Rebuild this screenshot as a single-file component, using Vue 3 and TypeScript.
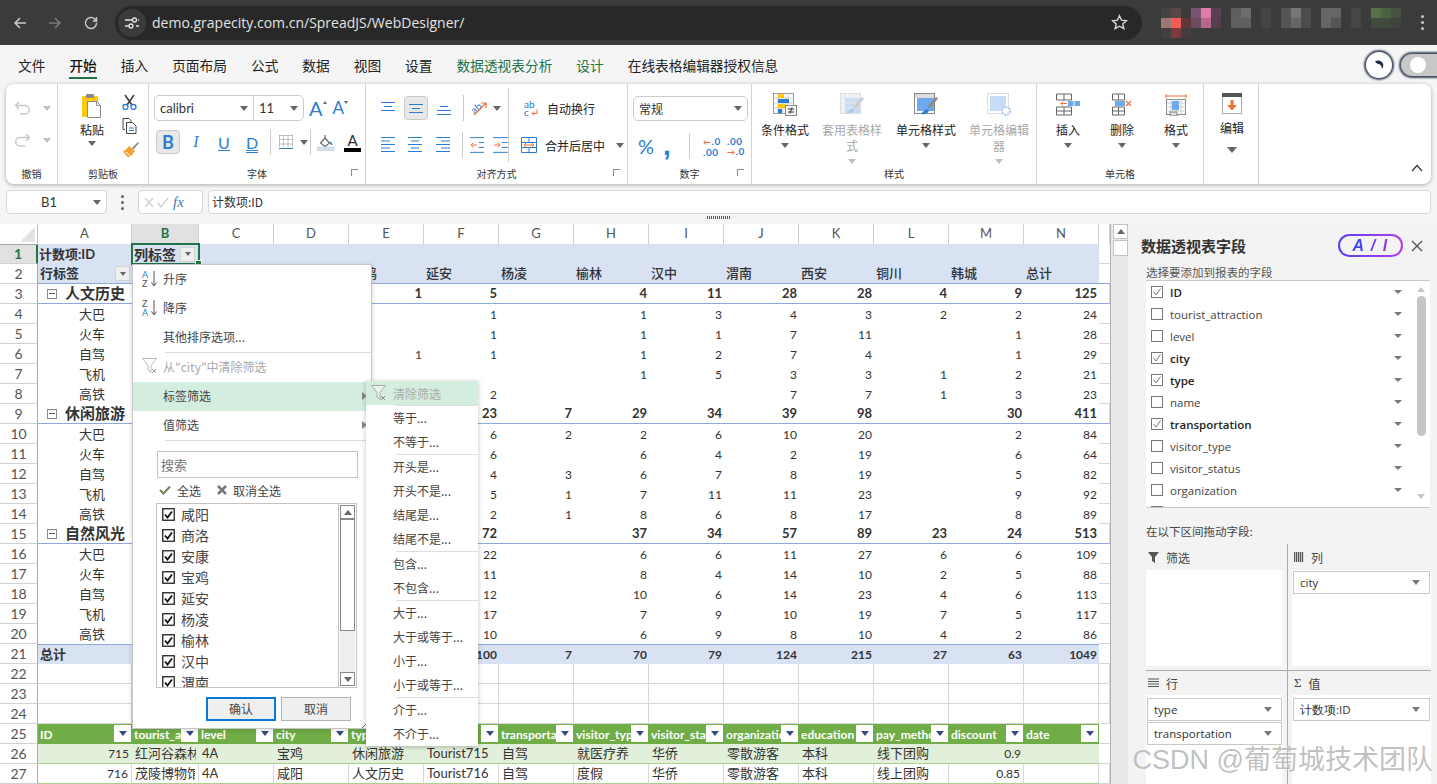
<script setup lang="ts">
interface SheetRow {
  n: number
  kind: string
  cells: string[]
}

// pivot values run from column E to N, blanks are empty strings
const pivot = (a: string, vals: string): string[] => {
  const list = vals.split(',')
  return [a, '', '', '', ...list]
}

const rows: SheetRow[] = [
  { n: 1, kind: 'head1', cells: ['计数项:ID', '列标签'] },
  { n: 2, kind: 'head2', cells: ['行标签', '咸阳', '商洛', '安康', '宝鸡', '延安', '杨凌', '榆林', '汉中', '渭南', '西安', '铜川', '韩城', '总计'] },
  { n: 3, kind: 'group', cells: pivot('人文历史', '1,5,,4,11,28,28,4,9,125') },
  { n: 4, kind: 'item', cells: pivot('大巴', ',1,,1,3,4,3,2,2,24') },
  { n: 5, kind: 'item', cells: pivot('火车', ',1,,1,1,7,11,,1,28') },
  { n: 6, kind: 'item', cells: pivot('自驾', '1,1,,1,2,7,4,,1,29') },
  { n: 7, kind: 'item', cells: pivot('飞机', ',,,1,5,3,3,1,2,21') },
  { n: 8, kind: 'item', cells: pivot('高铁', ',2,,,,7,7,1,3,23') },
  { n: 9, kind: 'group', cells: pivot('休闲旅游', ',23,7,29,34,39,98,,30,411') },
  { n: 10, kind: 'item', cells: pivot('大巴', ',6,2,2,6,10,20,,2,84') },
  { n: 11, kind: 'item', cells: pivot('火车', ',6,,6,4,2,19,,6,64') },
  { n: 12, kind: 'item', cells: pivot('自驾', ',4,3,6,7,8,19,,5,82') },
  { n: 13, kind: 'item', cells: pivot('飞机', ',5,1,7,11,11,23,,9,92') },
  { n: 14, kind: 'item', cells: pivot('高铁', ',2,1,8,6,8,17,,8,89') },
  { n: 15, kind: 'group', cells: pivot('自然风光', ',72,,37,34,57,89,23,24,513') },
  { n: 16, kind: 'item', cells: pivot('大巴', ',22,,6,6,11,27,6,6,109') },
  { n: 17, kind: 'item', cells: pivot('火车', ',11,,8,4,14,10,2,5,88') },
  { n: 18, kind: 'item', cells: pivot('自驾', ',12,,10,6,14,23,4,6,113') },
  { n: 19, kind: 'item', cells: pivot('飞机', ',17,,7,9,10,19,7,5,117') },
  { n: 20, kind: 'item', cells: pivot('高铁', ',10,,6,9,8,10,4,2,86') },
  { n: 21, kind: 'total', cells: pivot('总计', ',100,7,70,79,124,215,27,63,1049') },
  { n: 22, kind: 'blank', cells: [] },
  { n: 23, kind: 'blank', cells: [] },
  { n: 24, kind: 'blank', cells: [] },
  { n: 25, kind: 'thead', cells: ['ID', 'tourist_attraction', 'level', 'city', 'type', 'name', 'transportation', 'visitor_type', 'visitor_status', 'organization', 'education', 'pay_method', 'discount', 'date'] },
  { n: 26, kind: 'tband', cells: ['715', '红河谷森林', '4A', '宝鸡', '休闲旅游', 'Tourist715', '自驾', '就医疗养', '华侨', '零散游客', '本科', '线下团购', '0.9', ''] },
  { n: 27, kind: 'tbody', cells: ['716', '茂陵博物馆', '4A', '咸阳', '人文历史', 'Tourist716', '自驾', '度假', '华侨', '零散游客', '本科', '线上团购', '0.85', ''] },
]

const columns = 'ABCDEFGHIJKLMN'.split('')
const slots = Array.from({ length: 14 }, (_, i) => i)

const isNumeric = (row: SheetRow, i: number) => {
  if (row.kind === 'group' || row.kind === 'item' || row.kind === 'total') return i > 0
  if (row.kind === 'tband' || row.kind === 'tbody') return i === 0 || i === 12
  return false
}

const menuTabs = [
  { label: '文件' },
  { label: '开始', active: true },
  { label: '插入' },
  { label: '页面布局' },
  { label: '公式' },
  { label: '数据' },
  { label: '视图' },
  { label: '设置' },
  { label: '数据透视表分析', green: true },
  { label: '设计', green: true },
  { label: '在线表格编辑器授权信息' },
]

// blurred extension icons in the browser bar: x, y, colour
const blur: [number, number, string][] = [
  [0, 0, '#454343'], [10, 0, '#5a4646'], [30, 0, '#7c5472'], [40, 0, '#e07ca6'], [50, 0, '#5a3f52'],
  [70, 0, '#5e5e5e'], [80, 0, '#6c6c6c'], [100, 0, '#454545'], [120, 0, '#555'], [130, 0, '#777'], [140, 0, '#4c4c4c'],
  [160, 0, '#666'], [170, 0, '#666'], [190, 0, '#474747'], [210, 0, '#56704a'], [220, 0, '#4c6242'], [230, 0, '#465240'],
  [0, 10, '#9c7670'], [10, 10, '#f45c5c'], [20, 10, '#5f3a3a'], [30, 10, '#6c4a62'], [40, 10, '#b8648c'], [50, 10, '#533f4f'],
  [70, 10, '#606060'], [80, 10, '#606060'], [100, 10, '#454545'], [120, 10, '#555'], [130, 10, '#666'], [140, 10, '#4c4c4c'],
  [160, 10, '#666'], [170, 10, '#555'], [190, 10, '#474747'], [210, 10, '#414a3e'], [220, 10, '#404a3c'], [230, 10, '#3f443c'],
  [0, 20, '#454040'], [10, 20, '#7c3a3e'], [20, 20, '#463c3c'],
]

const cities = ['咸阳', '商洛', '安康', '宝鸡', '延安', '杨凌', '榆林', '汉中', '渭南']

const subGroups = [
  ['等于...', '不等于...'],
  ['开头是...', '开头不是...', '结尾是...', '结尾不是...'],
  ['包含...', '不包含...'],
  ['大于...', '大于或等于...', '小于...', '小于或等于...'],
  ['介于...', '不介于...'],
]

const fields = [
  { name: 'ID', on: true },
  { name: 'tourist_attraction', on: false },
  { name: 'level', on: false },
  { name: 'city', on: true },
  { name: 'type', on: true },
  { name: 'name', on: false },
  { name: 'transportation', on: true },
  { name: 'visitor_type', on: false },
  { name: 'visitor_status', on: false },
  { name: 'organization', on: false },
  { name: 'education_level', on: false },
]
</script>

<template>
  <div class="app">
    <!-- browser bar -->
    <header class="chrome">
      <svg class="nav-icon" viewBox="0 0 16 16"><path d="M14 8H3M8 3 3 8l5 5" fill="none" stroke="#c7c7c7" stroke-width="1.6" /></svg>
      <svg class="nav-icon fwd" viewBox="0 0 16 16"><path d="M2 8h11M8 3l5 5-5 5" fill="none" stroke="#7a7a7a" stroke-width="1.6" /></svg>
      <svg class="nav-icon reload" viewBox="0 0 16 16"><path d="M13.5 8a5.5 5.5 0 1 1-1.6-3.9L13.5 6V2M13.5 6H9.8" fill="none" stroke="#c7c7c7" stroke-width="1.5" /></svg>
      <div class="omnibox">
        <span class="site-info">
          <svg viewBox="0 0 16 16" width="16" height="16"><g fill="none" stroke="#e3e3e3" stroke-width="1.3"><path d="M1 5h7M12 11h3M1 11h4M14 5h1" /><circle cx="10.5" cy="5" r="2" /><circle cx="7" cy="11" r="2" /></g></svg>
        </span>
        <span class="url">demo.grapecity.com.cn/SpreadJS/WebDesigner/</span>
        <svg class="star" viewBox="0 0 16 16"><path d="m8 1.6 1.9 4.2 4.6.5-3.4 3 1 4.5L8 11.5l-4.1 2.3 1-4.5-3.4-3 4.6-.5z" fill="none" stroke="#d8d8d8" stroke-width="1.3" /></svg>
      </div>
      <svg class="blur" viewBox="0 0 240 30" width="240" height="30"><rect v-for="(b, i) in blur" :key="i" :x="b[0]" :y="b[1]" width="10" height="10" :fill="b[2]" /></svg>
      <span class="chrome-dots"><i /><i /><i /></span>
    </header>

    <!-- tab strip -->
    <nav class="menubar">
      <span v-for="tab in menuTabs" :key="tab.label" :class="['tab', { active: tab.active, green: tab.green }]">{{ tab.label }}</span>
      <span class="theme-btn">
        <svg viewBox="0 0 14 14" width="14" height="14"><path d="M3 3.5C6 1.5 10.5 3 11.2 6.5c.3 1.700-.2 3.200-1.200 4.500C10 8.500 8.500 6 6.500 6 5.500 6 4 5 3 3.500z" fill="#1e2a44" /></svg>
      </span>
      <span class="toggle"><i /></span>
    </nav>

    <!-- ribbon -->
    <section class="ribbon">
      <div class="group g-undo">
        <div class="group-body undo-body">
          <div class="undo-row">
            <svg width="17" height="16" viewBox="0 0 17 16"><path d="M5 2 1.500 5.500 5 9M1.500 5.500H11a4 4 0 0 1 0 8.500H6" fill="none" stroke="#c9c9c9" stroke-width="1.500" /></svg>
            <i class="caret light" />
          </div>
          <div class="undo-row">
            <svg width="17" height="16" viewBox="0 0 17 16"><path d="M12 2l3.500 3.500L12 9M15.500 5.500H6a4 4 0 0 0 0 8.500h5" fill="none" stroke="#c9c9c9" stroke-width="1.500" /></svg>
            <i class="caret light" />
          </div>
        </div>
        <div class="group-label">撤销</div>
      </div>

      <div class="group g-clip">
        <div class="group-body clip-body">
          <div class="paste">
            <svg width="20" height="24" viewBox="0 0 20 24">
              <rect x="0" y="2" width="16" height="21" rx="1" fill="#ffc90e" />
              <rect x="4" y="0" width="8" height="4" rx="1" fill="#8a8a8a" />
              <path d="M5.500 7.500h9l4 4v12h-13z" fill="#fff" stroke="#8c8c8c" />
              <path d="M14.500 7.500v4h4" fill="none" stroke="#8c8c8c" />
            </svg>
            <span class="paste-label">粘贴</span>
            <i class="caret" />
          </div>
          <div class="clip-tools">
            <svg width="15" height="16" viewBox="0 0 15 16"><path d="M3 1l7 10M12 1 5 11" stroke="#444" stroke-width="1.700" fill="none" /><circle cx="3.500" cy="13" r="2.500" fill="none" stroke="#2b7cd3" stroke-width="1.300" /><circle cx="11.500" cy="13" r="2.500" fill="none" stroke="#2b7cd3" stroke-width="1.300" /></svg>
            <svg width="15" height="16" viewBox="0 0 15 16"><path d="M1 .5h6l2 2V4M3 11.500H1V.5" fill="none" stroke="#444" /><path d="M4.500 4.500h6l3.500 3.500v7.500h-9.500z" fill="#fff" stroke="#444" /><path d="M7 10h5M7 12.500h5" stroke="#2b7cd3" /></svg>
            <svg width="17" height="16" viewBox="0 0 17 16"><path d="M10 6l6-6 1 1-5.500 6.500z" fill="#8a8a8a" /><path d="M7 4l6 5-3 4-4 2.500L1 9.500l3-2z" fill="#f7a035" /><path d="M4 10l4 3.500" stroke="#fff" /></svg>
          </div>
        </div>
        <div class="group-label">剪贴板</div>
      </div>

      <div class="group g-font">
        <div class="group-body font-body">
          <div class="tool-row">
            <div class="font-select">
              <span class="fs-name">calibri<i class="caret" /></span>
              <span class="fs-size">11<i class="caret" /></span>
            </div>
            <span class="grow-a big">A<i class="mini-up" /></span>
            <span class="grow-a small">A<i class="mini-down" /></span>
          </div>
          <div class="tool-row second">
            <span class="fmt-btn on"><b>B</b></span>
            <span class="fmt-btn"><em>I</em></span>
            <span class="fmt-btn"><u>U</u></span>
            <span class="fmt-btn dbl">D</span>
            <i class="vsep" />
            <svg class="border-icon" width="14" height="14" viewBox="0 0 14 14"><path d="M.5.5h13M.5 4.500h13M.5 9h13M.5.5v12M4.500.5v12M9 .5v12M13.500.5v12" fill="none" stroke="#888" stroke-dasharray="1 1" /><path d="M0 13.500h14" stroke="#2b7cd3" /></svg>
            <i class="caret border-caret" />
            <i class="vsep" />
            <svg class="fill-icon" width="18" height="17" viewBox="0 0 18 17"><path d="M8 1v3M8 4l4.500 5L8 12.500 3.500 9z" fill="none" stroke="#666" stroke-width="1.200" /><path d="M13 8c1 1.500 1.800 2.500 1.800 3" fill="none" stroke="#2b7cd3" stroke-width="1.500" /><rect x="0" y="13" width="17" height="4" fill="#d6e1ef" stroke="#bcc9da" stroke-width=".5" /></svg>
            <span class="font-color">A<i /></span>
          </div>
        </div>
        <div class="group-label">字体<i class="launcher" /></div>
      </div>

      <div class="group g-align">
        <div class="group-body align-body">
          <div class="align-cols">
            <div class="tool-row">
              <span class="al-btn"><svg width="16" height="14" viewBox="0 0 16 14"><path d="M1 1.500h14M4 5.500h8M1 9.500h14" stroke="#2b7cd3" /></svg></span>
              <span class="al-btn on"><svg width="16" height="14" viewBox="0 0 16 14"><path d="M1 3.500h14M4 7.500h8M1 11.500h14" stroke="#2b7cd3" /></svg></span>
              <span class="al-btn"><svg width="16" height="14" viewBox="0 0 16 14"><path d="M4 5.500h8M1 9.500h14M1 13.500h14" stroke="#2b7cd3" /></svg></span>
              <i class="vsep narrow" />
              <svg class="orient" width="17" height="17" viewBox="0 0 17 17"><text x="0" y="11" transform="rotate(-40 6 8)" class="orient-text">ab</text><path d="M3 15 15 3M10 3h5v5" fill="none" stroke="#f0703c" stroke-width="1.200" /></svg>
              <i class="caret orient-caret" />
            </div>
            <div class="tool-row second">
              <span class="al-btn"><svg width="16" height="16" viewBox="0 0 16 16"><path d="M1 .5h14M1 4h9M1 7.500h14M1 11h9M1 14.500h14" stroke="#2b7cd3" /></svg></span>
              <span class="al-btn"><svg width="16" height="16" viewBox="0 0 16 16"><path d="M1 .5h14M4 4h8M1 7.500h14M4 11h8M1 14.500h14" stroke="#2b7cd3" /></svg></span>
              <span class="al-btn"><svg width="16" height="16" viewBox="0 0 16 16"><path d="M1 .5h14M6 4h9M1 7.500h14M6 11h9M1 14.500h14" stroke="#2b7cd3" /></svg></span>
              <i class="vsep narrow" />
              <svg class="indent" width="15" height="16" viewBox="0 0 15 16"><path d="M0 .5h15M9 5.500h6M9 10.500h6M0 15.500h15" stroke="#2b7cd3" /><path d="M7 8H1M3.500 5.500 1 8l2.500 2.500" fill="none" stroke="#f0703c" /></svg>
              <svg class="indent" width="15" height="16" viewBox="0 0 15 16"><path d="M0 .5h15M9 5.500h6M9 10.500h6M0 15.500h15" stroke="#2b7cd3" /><path d="M1 8h6M4.500 5.500 7 8l-2.500 2.500" fill="none" stroke="#f0703c" /></svg>
            </div>
          </div>
          <i class="vsep tall" />
          <div class="wrap-cols">
            <div class="wrap-row first">
              <svg width="16" height="17" viewBox="0 0 16 17"><text x="1" y="8" class="wrap-ab">ab</text><text x="1" y="16" class="wrap-ab">c</text><path d="M14 9.500v4H9M11 11.500l-2 2 2 2" fill="none" stroke="#f0703c" /></svg>
              <span>自动换行</span>
            </div>
            <div class="wrap-row">
              <svg width="16" height="16" viewBox="0 0 16 16"><path d="M.5.500h15v15H.5zM.5 5.500h15M.5 10.500h15M8 .5v5M8 10.500v5" fill="none" stroke="#2b7cd3" /><path d="M3 8h10M5 6l-2 2 2 2M11 6l2 2-2 2" fill="none" stroke="#f0703c" /></svg>
              <span class="merge-text">合并后居中</span>
              <i class="caret" />
            </div>
          </div>
        </div>
        <div class="group-label">对齐方式<i class="launcher" /></div>
      </div>

      <div class="group g-num">
        <div class="group-body num-body">
          <div class="num-select">常规<i class="caret" /></div>
          <div class="tool-row num-tools">
            <span class="percent">%</span>
            <span class="comma">,</span>
            <i class="vsep narrow" />
            <span class="dec">
              <span><em>←</em>.0</span>
              <span>.00</span>
            </span>
            <span class="dec">
              <span>.00</span>
              <span><em>→</em>.0</span>
            </span>
          </div>
        </div>
        <div class="group-label">数字<i class="launcher" /></div>
      </div>

      <div class="group g-style">
        <div class="group-body style-body">
          <div class="big-btn">
            <svg width="24" height="23" viewBox="0 0 24 23">
              <rect x=".5" y=".5" width="20" height="20" fill="#fff" stroke="#999" />
              <path d="M5 .5v20M10 .5v20M15 .5v20M.5 5h20M.5 10h20M.5 15h20" stroke="#ccc" />
              <rect x="5" y="1" width="6" height="4" fill="#ffc90e" /><rect x="5" y="6" width="11" height="4" fill="#2b7cd3" />
              <rect x="5" y="11" width="8" height="4" fill="#ffc90e" /><rect x="5" y="16" width="4" height="4" fill="#2b7cd3" />
              <rect x="12.500" y="12.500" width="11" height="10" fill="#f5f5f5" stroke="#888" />
              <path d="M15 16h6M15 19h6M19 14.500l-2 6" stroke="#333" />
            </svg>
            <span>条件格式</span><i class="caret" />
          </div>
          <div class="big-btn off">
            <svg width="24" height="23" viewBox="0 0 24 23">
              <rect x=".5" y=".5" width="20" height="20" fill="#eef3fb" stroke="#ddd" />
              <rect x="5" y="5" width="15" height="15" fill="#c8dcf7" />
              <path d="M5 .5v20M10 .5v20M15 .5v20M.5 5h20M.5 10h20M.5 15h20" stroke="#e6e6e6" />
              <path d="M22 4l2 1.500-8 10-2.500-2z" fill="#ccc" /><path d="M7 20c2-3 5-5 7-4.500 2 .5 0 6-7 4.500z" fill="#a9c8ec" />
            </svg>
            <span>套用表格样式</span><i class="caret light" />
          </div>
          <div class="big-btn">
            <svg width="24" height="23" viewBox="0 0 24 23">
              <rect x=".5" y=".5" width="20" height="20" fill="#fff" stroke="#888" />
              <rect x="1" y="1" width="19" height="4" fill="#ddd" />
              <rect x="3" y="5" width="17" height="13" fill="#6ea9ed" />
              <path d="M22 4l2 1.500-8 10-2.500-2z" fill="#8a8a8a" /><path d="M7 21c2-3 5-5 7-4.500 2 .5 0 6-7 4.500z" fill="#2b7cd3" />
            </svg>
            <span>单元格样式</span><i class="caret" />
          </div>
          <div class="big-btn off">
            <svg width="24" height="23" viewBox="0 0 24 23">
              <rect x=".5" y=".5" width="21" height="20" fill="#fff" stroke="#ddd" />
              <rect x="3" y="3" width="16" height="15" fill="#c8dcf7" />
              <circle cx="19" cy="18" r="4" fill="#fff" stroke="#a9c8ec" stroke-width="2" stroke-dasharray="2 1" />
            </svg>
            <span>单元格编辑器</span><i class="caret light" />
          </div>
        </div>
        <div class="group-label">样式</div>
      </div>

      <div class="group g-cell">
        <div class="group-body cell-body">
          <div class="big-btn">
            <svg width="24" height="23" viewBox="0 0 24 23"><path d="M.5 1h15v6H.5zM8 1v6M.5 14h15v8H.5zM.5 18h15M8 14v8" fill="none" stroke="#666" /><rect x="12" y="8" width="12" height="5" fill="#6ea9ed" /><path d="M18 8v5" stroke="#fff" /><path d="M11 10.500H5M7 8.500l-2 2 2 2" fill="none" stroke="#f0703c" /></svg>
            <span>插入</span><i class="caret" />
          </div>
          <div class="big-btn">
            <svg width="22" height="23" viewBox="0 0 22 23"><path d="M1.500 1h12v6h-12zM7.500 1v6M1.500 14h12v8h-12zM1.500 18h12M7.500 14v8" fill="none" stroke="#666" /><rect x="4" y="8" width="10" height="5" fill="#6ea9ed" /><path d="M15 8l5 5M20 8l-5 5" stroke="#f0703c" stroke-width="1.200" /></svg>
            <span>删除</span><i class="caret" />
          </div>
          <div class="big-btn">
            <svg width="24" height="23" viewBox="0 0 24 23"><path d="M2 3h20M2 1v4M22 1v4" stroke="#f0703c" /><rect x="2.500" y="6.500" width="19" height="15" fill="#fff" stroke="#888" /><path d="M7 6.500v15M12 6.500v15M17 6.500v15M2.500 10h19M2.500 14h19M2.500 18h19" stroke="#ccc" /><rect x="8" y="8" width="7" height="9" fill="#6ea9ed" /><rect x="6" y="19" width="7" height="4" fill="#ddd" stroke="#888" /></svg>
            <span>格式</span><i class="caret" />
          </div>
        </div>
        <div class="group-label">单元格</div>
      </div>

      <div class="group g-edit">
        <div class="group-body edit-body">
          <div class="big-btn">
            <svg width="20" height="21" viewBox="0 0 20 21"><rect x=".5" y=".5" width="19" height="20" fill="#fff" stroke="#aaa" /><rect x="0" y="0" width="20" height="4" fill="#555" /><path d="M10 7v7" stroke="#f0703c" stroke-width="3" /><path d="M5 12h10l-5 5.500z" fill="#f0703c" /></svg>
            <span>编辑</span><i class="caret wide" />
          </div>
        </div>
      </div>

      <div class="ribbon-rest">
        <svg width="12" height="8" viewBox="0 0 12 8"><path d="M1 7l5-5.500L11 7" fill="none" stroke="#333" stroke-width="1.200" /></svg>
      </div>
    </section>

    <!-- formula bar -->
    <section class="formula">
      <div class="name-box">B1<i class="caret" /></div>
      <span class="fx-dots"><i /><i /><i /></span>
      <div class="fx-box">
        <svg width="26" height="11" viewBox="0 0 26 11"><path d="M1 1l8 9M9 1l-8 9M14 6l3 4 7-9" fill="none" stroke="#d0d0d0" stroke-width="1.300" /></svg>
        <em>fx</em>
      </div>
      <div class="fx-input">计数项:ID</div>
    </section>
    <div class="splitter"><i /></div>

    <main class="workspace">
      <!-- sheet -->
      <div class="sheet">
        <div class="sheet-row col-head">
          <div class="corner"><i /></div>
          <div v-for="c in columns" :key="c" :class="['col-cell', { sel: c === 'B' }]">{{ c }}</div>
          <div class="col-cell" />
        </div>
        <div v-for="row in rows" :key="row.n" :class="['sheet-row', row.kind]">
          <div :class="['row-no', { sel: row.n === 1 }]">{{ row.n }}</div>
          <div v-for="i in slots" :key="i" :class="['cell', { num: isNumeric(row, i), first: i === 0, sel: row.n === 1 && i === 1 }]">
            <i v-if="row.kind === 'group' && i === 0" class="minus" />
            <span class="cell-text">{{ row.cells[i] }}</span>
            <span v-if="(row.n === 1 && i === 1) || (row.n === 2 && i === 0)" class="pivot-filter"><i class="caret" /></span>
            <span v-if="row.kind === 'thead'" class="table-filter"><i /></span>
            <i v-if="row.n === 1 && i === 1" class="handle" />
          </div>
          <div class="cell tail" />
        </div>

        <!-- filter menu open over the sheet -->
        <div class="filter-menu">
          <div class="fm-item">
            <svg class="fm-icon" width="16" height="18" viewBox="0 0 16 18"><text x="0" y="8" class="sort-a">A</text><text x="0" y="17" class="sort-z">Z</text><path d="M12 1v14M9.500 12.500 12 16l2.500-3.500" fill="none" stroke="#555" /></svg>
            升序
          </div>
          <div class="fm-item">
            <svg class="fm-icon" width="16" height="18" viewBox="0 0 16 18"><text x="0" y="8" class="sort-z">Z</text><text x="0" y="17" class="sort-a">A</text><path d="M12 1v14M9.500 12.500 12 16l2.500-3.500" fill="none" stroke="#555" /></svg>
            降序
          </div>
          <div class="fm-item">其他排序选项...</div>
          <div class="fm-sep" />
          <div class="fm-item off">
            <svg class="fm-icon" width="16" height="16" viewBox="0 0 16 16"><path d="M.5 .5h14l-5.500 7v7l-3-2.500V7.500z" fill="#fff" stroke="#bbb" /><path d="M10 11l4 4M14 11l-4 4" stroke="#999" /></svg>
            从"city"中清除筛选
          </div>
          <div class="fm-item hot">标签筛选<i class="fm-arrow" /></div>
          <div class="fm-item">值筛选<i class="fm-arrow" /></div>
          <div class="fm-sep" />
          <div class="fm-search">搜索</div>
          <div class="fm-all">
            <svg width="12" height="10" viewBox="0 0 12 10"><path d="M1 5l3.500 3.500L11 1.500" fill="none" stroke="#70865a" stroke-width="2" /></svg>
            <span>全选</span>
            <svg class="fm-x" width="10" height="10" viewBox="0 0 10 10"><path d="M1 1l8 8M9 1 1 9" fill="none" stroke="#777" stroke-width="2.500" /></svg>
            <span>取消全选</span>
          </div>
          <div class="fm-list">
            <div class="fm-list-items">
              <div v-for="city in cities" :key="city" class="fm-city">
                <svg width="13" height="13" viewBox="0 0 13 13"><rect x=".75" y=".75" width="11.500" height="11.500" fill="#fff" stroke="#222" stroke-width="1.300" /><path d="M3 6.500l2.500 3L10 3.500" fill="none" stroke="#111" stroke-width="1.800" /></svg>
                {{ city }}
              </div>
            </div>
            <div class="fm-scroll">
              <span class="sb-btn"><i class="tri-up" /></span>
              <span class="sb-thumb" />
              <span class="sb-track" />
              <span class="sb-btn"><i class="caret" /></span>
            </div>
          </div>
          <div class="fm-actions">
            <span class="fm-btn ok">确认</span>
            <span class="fm-btn">取消</span>
          </div>
          <svg class="fm-grip" width="8" height="8" viewBox="0 0 8 8"><path d="M0 8l8-8M4 8l4-4" stroke="#777" /></svg>
        </div>

        <div class="filter-sub">
          <div class="fs-clear">
            <svg width="16" height="16" viewBox="0 0 16 16"><path d="M.5 .5h14l-5.500 7v7l-3-2.500V7.500z" fill="#e6f4ec" stroke="#aaa" /><path d="M10 11l4 4M14 11l-4 4" stroke="#888" /></svg>
            清除筛选
          </div>
          <template v-for="(list, g) in subGroups" :key="g">
            <div class="fs-sep" />
            <div v-for="label in list" :key="label" class="fs-item">{{ label }}</div>
          </template>
        </div>
      </div>

      <div class="sheet-scroll">
        <span class="ss-btn"><i class="tri-up" /></span>
        <span class="ss-btn thumb" />
      </div>

      <!-- pivot field panel -->
      <aside class="panel">
        <div class="panel-head">
          <span class="panel-title">数据透视表字段</span>
          <span class="ai-badge"><span class="ai-text">A / I</span></span>
          <svg class="panel-close" width="12" height="12" viewBox="0 0 12 12"><path d="M1 1l10 10M11 1 1 11" stroke="#555" stroke-width="1.400" /></svg>
        </div>
        <div class="panel-sub">选择要添加到报表的字段</div>
        <div class="field-box">
          <div class="field-list">
            <div v-for="f in fields" :key="f.name" :class="['field', { on: f.on }]">
              <svg width="12" height="12" viewBox="0 0 12 12"><rect x=".5" y=".5" width="11" height="11" fill="#fff" stroke="#777" /><path v-if="f.on" d="M2.500 6l2.500 3L9.500 2.500" fill="none" stroke="#777" /></svg>
              <span class="field-name">{{ f.name }}</span>
              <i class="caret" />
            </div>
          </div>
          <div class="field-scroll">
            <i class="tri-up gray" />
            <span class="fsb-thumb" />
            <i class="caret gray" />
          </div>
        </div>
        <div class="zones-title">在以下区间拖动字段:</div>
        <div class="zones">
          <div class="zone left top">
            <div class="zone-label">
              <svg width="11" height="11" viewBox="0 0 11 11"><path d="M0 0h11L7 5v6L4 9V5z" fill="#555" /></svg>筛选
            </div>
            <div class="zone-box" />
          </div>
          <div class="zone right top">
            <div class="zone-label">
              <svg width="10" height="10" viewBox="0 0 10 10"><path d="M.5 0v10M2.500 0v10M4.500 0v10M6.500 0v10M8.500 0v10" stroke="#555" stroke-width="1.300" /></svg>列
            </div>
            <div class="zone-box">
              <div class="token">city<i class="caret" /></div>
            </div>
          </div>
          <div class="zone left">
            <div class="zone-label">
              <svg width="11" height="10" viewBox="0 0 11 10"><path d="M0 1h11M0 3.500h11M0 6h11M0 8.500h11" stroke="#555" stroke-width="1.100" /></svg>行
            </div>
            <div class="zone-box">
              <div class="token">type<i class="caret" /></div>
              <div class="token">transportation<i class="caret" /></div>
            </div>
          </div>
          <div class="zone right">
            <div class="zone-label"><span class="sigma">Σ</span>值</div>
            <div class="zone-box">
              <div class="token">计数项:ID<i class="caret" /></div>
            </div>
          </div>
        </div>
      </aside>
    </main>

    <div class="watermark">CSDN @葡萄城技术团队</div>
  </div>
</template>

<style>
html,
body {
  margin: 0;
  background: #f5f5f5;
}
</style>

<style scoped>
.app {
  position: relative;
  display: flex;
  flex-direction: column;
  width: 1437px;
  height: 784px;
  overflow: hidden;
  background: #f5f5f5;
  color: #333;
  font-family: "Noto Sans CJK SC", sans-serif;
  font-size: 12px;
}
i {
  display: block;
  font-style: normal;
}

/* browser bar */
.chrome {
  display: flex;
  align-items: center;
  flex: none;
  height: 45px;
  background: #3b3b3b;
}
.nav-icon {
  width: 16px;
  height: 16px;
  margin-left: 12px;
}
.nav-icon.fwd {
  margin-left: 19px;
}
.nav-icon.reload {
  margin-left: 20px;
}
.omnibox {
  display: flex;
  align-items: center;
  width: 1027px;
  height: 34px;
  margin-left: 16px;
  border-radius: 17px;
  background: #282828;
}
.site-info {
  display: flex;
  align-items: center;
  justify-content: center;
  width: 28px;
  height: 28px;
  margin-left: 3px;
  border-radius: 50%;
  background: #3b3b3b;
}
.url {
  margin-left: 6px;
  color: #e3e3e3;
  font-family: "Open Sans", sans-serif;
  font-size: 14px;
}
.star {
  width: 17px;
  height: 17px;
  margin-left: auto;
  margin-right: 14px;
}
.blur {
  margin-left: 19px;
}
.chrome-dots {
  display: flex;
  flex-direction: column;
  gap: 3px;
  margin-left: 20px;
}
.chrome-dots i {
  width: 3px;
  height: 3px;
  border-radius: 50%;
  background: #c7c7c7;
}

/* tab strip */
.menubar {
  display: flex;
  align-items: center;
  flex: none;
  gap: 24px;
  height: 39px;
  padding-left: 18px;
  color: #222;
  font-size: 13.7px;
}
.tab {
  position: relative;
  line-height: 20px;
}
.tab.active {
  font-weight: 500;
  color: #111;
}
.tab.active::after {
  content: "";
  position: absolute;
  left: 0;
  right: 0;
  bottom: -4px;
  height: 2px;
  background: #217346;
}
.tab.green {
  color: #217346;
}
.theme-btn {
  display: flex;
  align-items: center;
  justify-content: center;
  width: 26px;
  height: 26px;
  margin-left: auto;
  margin-right: -15px;
  border-radius: 50%;
  background: #fff;
  box-shadow: 0 0 2px 2px #3f4a60;
}
.toggle {
  flex: none;
  width: 54px;
  height: 22px;
  margin-right: -18px;
  padding: 3px 9px;
  border-radius: 11px;
  background: #c8c8c8;
  box-sizing: border-box;
  box-shadow: 0 0 2px 2px #3f4a60;
}
.toggle i {
  width: 16px;
  height: 16px;
  border-radius: 50%;
  background: #fff;
}

/* ribbon */
.ribbon {
  display: flex;
  flex: none;
  height: 100px;
  margin: 0 6px;
  border-radius: 8px;
  background: #fff;
  box-shadow: 0 1px 4px rgba(0, 0, 0, 0.3);
}
.group {
  position: relative;
  display: flex;
  flex-direction: column;
  flex: none;
  box-sizing: border-box;
  border-right: 1px solid #d4d4d4;
}
.group-body {
  flex: 1;
  min-height: 0;
}
.group-label {
  position: relative;
  flex: none;
  height: 18px;
  line-height: 15px;
  text-align: center;
  color: #333;
  font-size: 10px;
}
.launcher {
  position: absolute;
  right: 7px;
  top: 3px;
  width: 6px;
  height: 6px;
  border-left: 1px solid #888;
  border-top: 1px solid #888;
}
.caret {
  width: 0;
  height: 0;
  border-left: 4px solid transparent;
  border-right: 4px solid transparent;
  border-top: 5px solid #666;
}
.caret.light {
  border-top-color: #c0c0c0;
}
.caret.gray {
  border-top-color: #c4c4c4;
}
.tri-up {
  width: 0;
  height: 0;
  border-left: 4px solid transparent;
  border-right: 4px solid transparent;
  border-bottom: 5px solid #666;
}
.tri-up.gray {
  border-bottom-color: #c4c4c4;
}
.vsep {
  width: 1px;
  background: #ccc;
}
.tool-row {
  display: flex;
  align-items: center;
}

.g-undo {
  width: 52px;
}
.undo-body {
  display: flex;
  flex-direction: column;
  gap: 16px;
  padding: 16px 0 0 8px;
}
.undo-row {
  display: flex;
  align-items: center;
  gap: 12px;
}
.undo-row svg {
  flex: none;
}
.g-clip {
  width: 91px;
}
.clip-body {
  display: flex;
  padding: 10px 0 0 22px;
}
.paste {
  display: flex;
  flex-direction: column;
  align-items: center;
  width: 24px;
}
.paste-label {
  margin-top: 3px;
  line-height: 18px;
  color: #222;
}
.paste .caret {
  margin-top: 2px;
}
.clip-tools {
  display: flex;
  flex-direction: column;
  gap: 8px;
  margin-left: 18px;
}
.g-font {
  width: 217px;
}
.font-body {
  padding: 11px 0 0 5px;
}
.font-select {
  display: flex;
  width: 150px;
  height: 26px;
  border: 1px solid #ccc;
  border-radius: 5px;
  box-sizing: border-box;
  color: #333;
  font-family: Lato, sans-serif;
  font-size: 13px;
}
.fs-name,
.fs-size {
  display: flex;
  align-items: center;
  justify-content: space-between;
  padding: 0 5px;
}
.fs-name {
  width: 99px;
  box-sizing: border-box;
  border-right: 1px solid #ccc;
}
.fs-size {
  flex: 1;
}
.grow-a {
  position: relative;
  color: #2b7cd3;
  font-family: Lato, sans-serif;
  line-height: 20px;
}
.grow-a.big {
  margin-left: 5px;
  font-size: 20px;
}
.grow-a.small {
  margin-left: 10px;
  font-size: 17px;
}
.mini-up,
.mini-down {
  position: absolute;
  right: -4px;
  top: 3px;
  width: 0;
  height: 0;
  border-left: 2.5px solid transparent;
  border-right: 2.5px solid transparent;
}
.mini-up {
  border-bottom: 3px solid #666;
}
.mini-down {
  border-top: 3px solid #666;
}
.tool-row.second {
  margin-top: 8px;
  height: 26px;
}
.font-body .tool-row.second {
  padding-left: 2px;
}
.fmt-btn {
  display: flex;
  align-items: center;
  justify-content: center;
  width: 24px;
  height: 24px;
  margin-right: 4px;
  border: 1px solid transparent;
  border-radius: 4px;
  box-sizing: border-box;
  color: #2b7cd3;
  font-family: Lato, sans-serif;
  font-size: 16px;
}
.fmt-btn.on {
  border-color: #c8c8c8;
  background: #e8e8e8;
}
.fmt-btn b {
  font-size: 18px;
}
.fmt-btn em {
  font-family: "Liberation Serif", serif;
}
.fmt-btn.dbl {
  text-decoration: underline double;
}
.font-body .vsep {
  height: 26px;
  margin-left: 2px;
}
.border-icon {
  margin-left: 8px;
}
.border-caret {
  margin-left: 7px;
}
.fill-icon {
  margin-left: 6px;
}
.font-color {
  margin-left: 9px;
  width: 17px;
  color: #333;
  font-family: Lato, sans-serif;
  font-size: 15px;
  line-height: 15px;
  text-align: center;
}
.font-color i {
  height: 4px;
  background: #000;
}
.g-align {
  width: 262px;
}
.align-body {
  display: flex;
  padding: 12px 0 0 0;
}
.align-cols {
  width: 142px;
}
.al-btn {
  display: flex;
  align-items: center;
  justify-content: center;
  width: 24px;
  height: 24px;
  margin: 0 4px 0 0;
  border: 1px solid transparent;
  border-radius: 4px;
  box-sizing: border-box;
}
.align-cols .tool-row {
  height: 24px;
  padding-left: 10px;
}
.align-cols .tool-row.second {
  margin-top: 13px;
}
.al-btn.on {
  border-color: #c8c8c8;
  background: #e8e8e8;
}
.vsep.narrow {
  flex: none;
  height: 26px;
  margin: 0 7px 0 3px;
}
.orient-text {
  fill: #2b7cd3;
  font-family: Lato, sans-serif;
  font-size: 10px;
}
.orient-caret {
  margin-left: 5px;
}
.indent + .indent {
  margin-left: 9px;
}
.vsep.tall {
  flex: none;
  height: 74px;
  margin-top: -8px;
}
.wrap-cols {
  display: flex;
  flex-direction: column;
  padding-left: 12px;
}
.wrap-row {
  display: flex;
  align-items: center;
  gap: 8px;
  height: 24px;
  color: #222;
}
.wrap-row.first {
  margin-bottom: 13px;
  padding-left: 2px;
}
.wrap-ab {
  fill: #2b7cd3;
  font-family: Lato, sans-serif;
  font-size: 10px;
}
.merge-text {
  margin-right: 3px;
}
.g-num {
  width: 124px;
}
.num-body {
  padding: 12px 0 0 5px;
}
.num-select {
  display: flex;
  align-items: center;
  justify-content: space-between;
  width: 115px;
  height: 25px;
  padding: 0 5px;
  border: 1px solid #ccc;
  border-radius: 5px;
  box-sizing: border-box;
  color: #333;
}
.num-tools {
  height: 26px;
  margin-top: 12px;
}
.percent {
  width: 18px;
  margin-left: 5px;
  color: #2b7cd3;
  font-family: Lato, sans-serif;
  font-size: 20px;
  line-height: 22px;
}
.comma {
  width: 26px;
  margin-left: 7px;
  color: #2b7cd3;
  font-family: "Liberation Sans", sans-serif;
  font-size: 28px;
  font-weight: 700;
  line-height: 16px;
}
.num-tools .vsep.narrow {
  margin: 0 13px 0 0;
}
.dec {
  display: flex;
  flex-direction: column;
  width: 24px;
  color: #2b7cd3;
  font-family: Lato, sans-serif;
  font-size: 10px;
  font-weight: 700;
  line-height: 10px;
  letter-spacing: 0.5px;
}
.dec em {
  color: #f0703c;
  font-style: normal;
  font-size: 8px;
}
.g-style {
  width: 285px;
}
.style-body {
  display: grid;
  grid-template-columns: 67px 74px 73px 60px;
  padding: 9px 0 0 3px;
}
.big-btn {
  display: flex;
  flex-direction: column;
  align-items: center;
  width: 60px;
  color: #222;
  line-height: 16px;
  text-align: center;
}
.big-btn svg {
  flex: none;
}
.big-btn span {
  margin-top: 6px;
}
.big-btn .caret {
  margin-top: 5px;
}
.big-btn.off {
  color: #a8a8a8;
}
.g-cell {
  width: 167px;
}
.cell-body {
  display: flex;
  padding: 9px 0 0 4px;
}
.cell-body .big-btn {
  width: 54px;
}
.g-edit {
  width: 55px;
}
.edit-body {
  padding: 9px 0 0 0;
}
.edit-body .big-btn {
  width: 56px;
}
.big-btn .caret.wide {
  margin-top: 11px;
  border-left-width: 5px;
  border-right-width: 5px;
  border-top-width: 6px;
}
.ribbon-rest {
  display: flex;
  align-items: flex-end;
  justify-content: flex-end;
  flex: 1;
  padding: 0 8px 12px 0;
}

/* formula bar */
.formula {
  display: flex;
  align-items: center;
  flex: none;
  height: 24px;
  margin: 6px 6px 0;
}
.name-box {
  position: relative;
  width: 101px;
  height: 24px;
  padding-left: 34px;
  border: 1px solid #d8d8d8;
  border-radius: 4px;
  box-sizing: border-box;
  background: #fff;
  line-height: 22px;
  font-family: Lato, sans-serif;
  font-size: 13px;
}
.name-box .caret {
  position: absolute;
  right: 5px;
  top: 9px;
}
.fx-dots {
  display: flex;
  flex-direction: column;
  gap: 3px;
  margin: 0 14px;
}
.fx-dots i {
  width: 3px;
  height: 3px;
  border-radius: 50%;
  background: #666;
}
.fx-box {
  display: flex;
  align-items: center;
  gap: 3px;
  width: 65px;
  height: 24px;
  padding-left: 5px;
  border: 1px solid #d8d8d8;
  border-radius: 4px;
  box-sizing: border-box;
  background: #fff;
}
.fx-box em {
  color: #4478b0;
  font-family: "Liberation Serif", serif;
  font-size: 15px;
}
.fx-input {
  flex: 1;
  height: 24px;
  margin-left: 5px;
  padding-left: 3px;
  border: 1px solid #d8d8d8;
  border-radius: 4px;
  box-sizing: border-box;
  background: #fff;
  line-height: 22px;
  font-size: 12px;
}
.splitter {
  flex: none;
  height: 10px;
  padding-top: 2px;
  box-sizing: border-box;
}
.splitter i {
  width: 24px;
  height: 3px;
  margin: 0 auto;
  background: repeating-linear-gradient(90deg, #555 0 1px, transparent 1px 2px);
}

/* sheet */
.workspace {
  display: flex;
  flex: 1;
  min-height: 0;
}
.sheet {
  position: relative;
  flex: none;
  width: 1110px;
  border-right: 1px solid #b4b4b4;
  background: #fff;
  font-family: Lato, "Noto Sans CJK SC", sans-serif;
  font-size: 13px;
  color: #333;
}
.sheet-row {
  display: grid;
  grid-template-columns: 38px 94px 67px repeat(12, 75px) 11px;
  height: 20px;
}
.col-head {
  background: #fff;
}
.corner {
  position: relative;
  border-right: 1px solid #c8c8c8;
  border-bottom: 1px solid #a8a8a8;
}
.corner i {
  position: absolute;
  right: 2px;
  bottom: 2px;
  width: 0;
  height: 0;
  border-left: 15px solid transparent;
  border-bottom: 15px solid #e3e3e3;
}
.col-cell {
  border-right: 1px solid #d0d0d0;
  border-bottom: 1px solid #a8a8a8;
  box-sizing: border-box;
  color: #555;
  line-height: 19px;
  text-align: center;
}
.col-cell.sel {
  background: #e1e1e1;
  border-bottom: 2px solid #217346;
  color: #217346;
  font-weight: 700;
}
.row-no {
  border-right: 1px solid #a8a8a8;
  border-bottom: 1px solid #d0d0d0;
  box-sizing: border-box;
  color: #555;
  font-size: 14px;
  line-height: 19px;
  text-align: center;
}
.row-no.sel {
  background: #e1e1e1;
  border-right: 2px solid #217346;
  color: #217346;
  font-weight: 700;
}
.cell {
  position: relative;
  display: flex;
  align-items: center;
  min-width: 0;
  padding: 0 2px;
  box-sizing: border-box;
  white-space: nowrap;
  line-height: 19px;
}
.cell-text {
  overflow: hidden;
}
.cell.num {
  justify-content: flex-end;
  font-size: 12px;
}
.cell.tail {
  padding: 0;
  border-bottom: 1px solid #d8d8d8;
}
.head1 .cell,
.head2 .cell,
.total .cell {
  background: #d9e2f3;
}
.head1 .cell.tail,
.head2 .cell.tail,
.total .cell.tail {
  background: #fff;
}
.head1 .cell {
  font-weight: 700;
}
.head1 .cell.first {
  padding-left: 1px;
}
.head1 .cell:nth-child(3) {
  font-size: 14px;
}
.head2 .cell {
  font-weight: 500;
  border-bottom: 1px solid #8ea9db;
}
.head2 .cell.first {
  font-weight: 700;
}
.group .cell {
  border-bottom: 1px solid #8ea9db;
  font-weight: 700;
}
.group .cell.num {
  font-size: 13px;
}
.group .cell.first {
  font-size: 15px;
}
.minus {
  flex: none;
  position: relative;
  width: 10px;
  height: 10px;
  margin: 0 8px 0 7px;
  border: 1px solid #888;
  box-sizing: border-box;
}
.minus::after {
  content: "";
  position: absolute;
  left: 1px;
  right: 1px;
  top: 3px;
  height: 1px;
  background: #555;
}
.item .cell.first {
  padding-left: 41px;
}
.total .cell {
  border-top: 1px solid #8ea9db;
  font-weight: 700;
}
.total .cell.tail {
  border-top: 0;
}
.blank .cell {
  border-right: 1px solid #d8d8d8;
  border-bottom: 1px solid #d8d8d8;
}
.thead .cell {
  background: #70ad47;
  color: #fff;
  font-size: 12px;
  font-weight: 700;
}
.thead .cell.tail {
  background: #fff;
}
.tband .cell,
.tbody .cell {
  padding: 0 3px;
  border-bottom: 1px solid #a9d08e;
}
.tband .cell {
  background: #e2efda;
}
.tbody .cell {
  border-right: 1px solid #d8d8d8;
}
.tband .cell.tail,
.tbody .cell.tail {
  background: #fff;
  border-bottom: 1px solid #d8d8d8;
}
.pivot-filter {
  display: flex;
  align-items: center;
  justify-content: center;
  flex: none;
  width: 15px;
  height: 15px;
  margin-left: auto;
  border: 1px solid #d4d4d4;
  box-sizing: border-box;
  background: #efefef;
}
.pivot-filter .caret {
  border-left-width: 3.5px;
  border-right-width: 3.5px;
  border-top-width: 4px;
}
.head1 .pivot-filter {
  margin-left: 4px;
}
.table-filter {
  position: absolute;
  right: 1px;
  top: 1px;
  display: flex;
  align-items: center;
  justify-content: center;
  width: 17px;
  height: 17px;
  background: #fff;
}
.table-filter i {
  width: 0;
  height: 0;
  border-left: 4px solid transparent;
  border-right: 4px solid transparent;
  border-top: 5px solid #3a4a80;
}
.cell.sel {
  outline: 2px solid #217346;
  outline-offset: -1px;
  z-index: 1;
}
.handle {
  position: absolute;
  right: -3px;
  bottom: -3px;
  width: 5px;
  height: 5px;
  background: #217346;
  border: 1px solid #fff;
}

/* filter menu */
.filter-menu {
  position: absolute;
  left: 132px;
  top: 40px;
  z-index: 3;
  width: 240px;
  height: 465px;
  box-sizing: border-box;
  border: 1px solid #c6c6c6;
  background: #fff;
  box-shadow: 0 1px 5px rgba(0, 0, 0, 0.15);
  font-family: "Noto Sans CJK SC", sans-serif;
  font-size: 12px;
  color: #444;
}
.fm-item {
  position: relative;
  height: 29px;
  padding-left: 30px;
  line-height: 28px;
}
.fm-item.off {
  color: #aaa;
}
.fm-item.hot {
  background: #d3eddf;
}
.fm-icon {
  position: absolute;
  left: 9px;
  top: 5px;
}
.sort-a {
  fill: #2b7cd3;
  font-family: Lato, sans-serif;
  font-size: 9px;
}
.sort-z {
  fill: #555;
  font-family: Lato, sans-serif;
  font-size: 9px;
}
.fm-sep {
  height: 1px;
  margin-left: 32px;
  background: #ddd;
}
.fm-arrow {
  position: absolute;
  right: 4px;
  top: 10px;
  width: 0;
  height: 0;
  border-top: 4px solid transparent;
  border-bottom: 4px solid transparent;
  border-left: 5px solid #888;
}
.fm-search {
  width: 201px;
  height: 27px;
  margin: 10px 0 0 24px;
  padding-left: 3px;
  border: 1px solid #c4c4c4;
  box-sizing: border-box;
  color: #777;
  line-height: 25px;
  font-size: 13px;
}
.fm-all {
  display: flex;
  align-items: center;
  gap: 6px;
  height: 20px;
  margin: 2px 0 0 26px;
}
.fm-x {
  margin-left: 10px;
}
.fm-list {
  display: flex;
  width: 201px;
  height: 185px;
  margin: 3px 0 0 23px;
  border: 1px solid #c4c4c4;
  box-sizing: border-box;
}
.fm-list-items {
  flex: 1;
  overflow: hidden;
  padding: 0 0 0 5px;
}
.fm-city {
  display: flex;
  align-items: center;
  gap: 6px;
  height: 21px;
  font-size: 14px;
  line-height: 21px;
}
.fm-scroll {
  display: flex;
  flex-direction: column;
  flex: none;
  width: 18px;
  padding: 1px;
  border-left: 1px solid #c4c4c4;
  box-sizing: border-box;
}
.sb-btn {
  display: flex;
  align-items: center;
  justify-content: center;
  flex: none;
  height: 14px;
  border: 1px solid #888;
  box-sizing: border-box;
}
.sb-thumb {
  flex: none;
  height: 112px;
  border: 1px solid #888;
  box-sizing: border-box;
}
.sb-track {
  flex: 1;
  background: #eee;
}
.fm-actions {
  display: flex;
  gap: 5px;
  margin: 9px 0 0 73px;
}
.fm-btn {
  width: 70px;
  height: 24px;
  border: 1px solid #b4b4b4;
  box-sizing: border-box;
  background: #efefef;
  line-height: 22px;
  text-align: center;
}
.fm-btn.ok {
  border: 2px solid #0a78d7;
  line-height: 20px;
}
.fm-grip {
  position: absolute;
  right: 1px;
  bottom: 0;
}
.filter-sub {
  position: absolute;
  left: 366px;
  top: 157px;
  z-index: 4;
  width: 112px;
  background: #fff;
  box-shadow: 0 1px 5px rgba(0, 0, 0, 0.25);
  font-family: "Noto Sans CJK SC", sans-serif;
  font-size: 12px;
  color: #444;
  padding-bottom: 0;
}
.fs-clear {
  display: flex;
  align-items: center;
  gap: 6px;
  height: 24px;
  padding-left: 5px;
  background: #d3eddf;
  color: #aaa;
}
.fs-sep {
  height: 1px;
  margin-left: 30px;
  background: #ddd;
}
.fs-item {
  height: 24px;
  padding-left: 27px;
  line-height: 24px;
}
.sheet-scroll {
  display: flex;
  flex-direction: column;
  flex: none;
  width: 17px;
  padding-left: 2px;
  box-sizing: border-box;
  background: #e8e8e8;
}
.ss-btn {
  display: flex;
  align-items: center;
  justify-content: center;
  height: 15px;
  border: 1px solid #c4c4c4;
  box-sizing: border-box;
  background: #fff;
}
.ss-btn.thumb {
  height: 16px;
  margin-top: 1px;
}

/* pivot panel */
.panel {
  flex: 1;
  min-width: 0;
  background: #f3f3f3;
}
.panel-head {
  display: flex;
  align-items: center;
  height: 38px;
  padding: 5px 0 0 13px;
  box-sizing: border-box;
}
.panel-title {
  font-size: 15px;
  font-weight: 700;
  color: #333;
}
.ai-badge {
  display: flex;
  align-items: center;
  justify-content: center;
  width: 65px;
  height: 23px;
  margin-left: auto;
  border: 2px solid transparent;
  border-radius: 12px;
  box-sizing: border-box;
  background: linear-gradient(#f3f3f3, #f3f3f3) padding-box, linear-gradient(90deg, #5a3df0, #b23de8) border-box;
}
.ai-text {
  background: linear-gradient(90deg, #2f47f0, #a033e8);
  -webkit-background-clip: text;
  background-clip: text;
  color: transparent;
  font-family: "Liberation Sans", sans-serif;
  font-size: 16px;
  font-style: italic;
  font-weight: 700;
  letter-spacing: 1.5px;
}
.panel-close {
  margin: 0 14px 0 8px;
}
.panel-sub {
  height: 18px;
  padding-left: 18px;
  color: #555;
  line-height: 20px;
  font-size: 11.5px;
}
.field-box {
  display: flex;
  width: 284px;
  height: 228px;
  margin-left: 18px;
  border-top: 1px solid #c8c8c8;
  border-bottom: 1px solid #c8c8c8;
  box-sizing: border-box;
  background: #fff;
  overflow: hidden;
}
.field-list {
  flex: 1;
  padding: 0 0 0 5px;
}
.field {
  display: flex;
  align-items: center;
  height: 22px;
  color: #444;
  font-family: "Open Sans", sans-serif;
  font-size: 11.5px;
}
.field svg {
  flex: none;
}
.field.on {
  color: #222;
  font-weight: 600;
}
.field-name {
  margin-left: 7px;
}
.field .caret {
  margin-left: auto;
  margin-right: 13px;
  border-top-color: #777;
  border-top-width: 4px;
}
.field-scroll {
  display: flex;
  flex-direction: column;
  align-items: center;
  flex: none;
  width: 12px;
  margin-right: 3px;
  padding-top: 6px;
}
.fsb-thumb {
  width: 9px;
  height: 140px;
  margin-top: 4px;
  border-radius: 5px;
  background: #c6c6c6;
}
.field-scroll .caret {
  margin-top: 58px;
}
.zones-title {
  height: 36px;
  padding-left: 18px;
  color: #444;
  line-height: 47px;
  font-size: 11.5px;
}
.zones {
  display: grid;
  grid-template-columns: 142px 143px;
  grid-template-rows: 127px 1fr;
  height: 240px;
  margin-left: 18px;
}
.zone {
  display: flex;
  flex-direction: column;
  box-sizing: border-box;
}
.zone.left {
  padding-right: 4px;
  border-right: 1px solid #aaa;
}
.zone.right {
  padding-left: 4px;
}
.zone.top {
  padding-bottom: 4px;
  border-bottom: 1px solid #aaa;
}
.zone-label {
  display: flex;
  align-items: center;
  gap: 7px;
  flex: none;
  height: 26px;
  padding-left: 2px;
  color: #444;
}
.zone:not(.top) .zone-label {
  height: 24px;
}
.sigma {
  font-family: "Liberation Serif", serif;
  font-size: 13px;
  line-height: 12px;
}
.zone-box {
  flex: 1;
  padding: 1px 1px 0;
  background: #fff;
}
.zone:not(.top) .zone-box {
  padding-top: 3px;
}
.token {
  display: flex;
  align-items: center;
  justify-content: space-between;
  height: 23px;
  margin-bottom: 1px;
  padding: 0 9px 0 6px;
  border: 1px solid #c8c8c8;
  box-sizing: border-box;
  background: #fff;
  color: #333;
  font-family: "Open Sans", sans-serif;
  font-size: 11.5px;
}
.token .caret {
  border-top-color: #777;
}

.watermark {
  position: absolute;
  right: 4px;
  bottom: 7px;
  z-index: 6;
  color: rgba(140, 140, 140, 0.55);
  font-family: "Liberation Sans", "Noto Sans CJK SC", sans-serif;
  font-size: 27px;
  line-height: 34px;
  text-shadow: 0 0 2px rgba(255, 255, 255, 0.9);
  pointer-events: none;
}
</style>
